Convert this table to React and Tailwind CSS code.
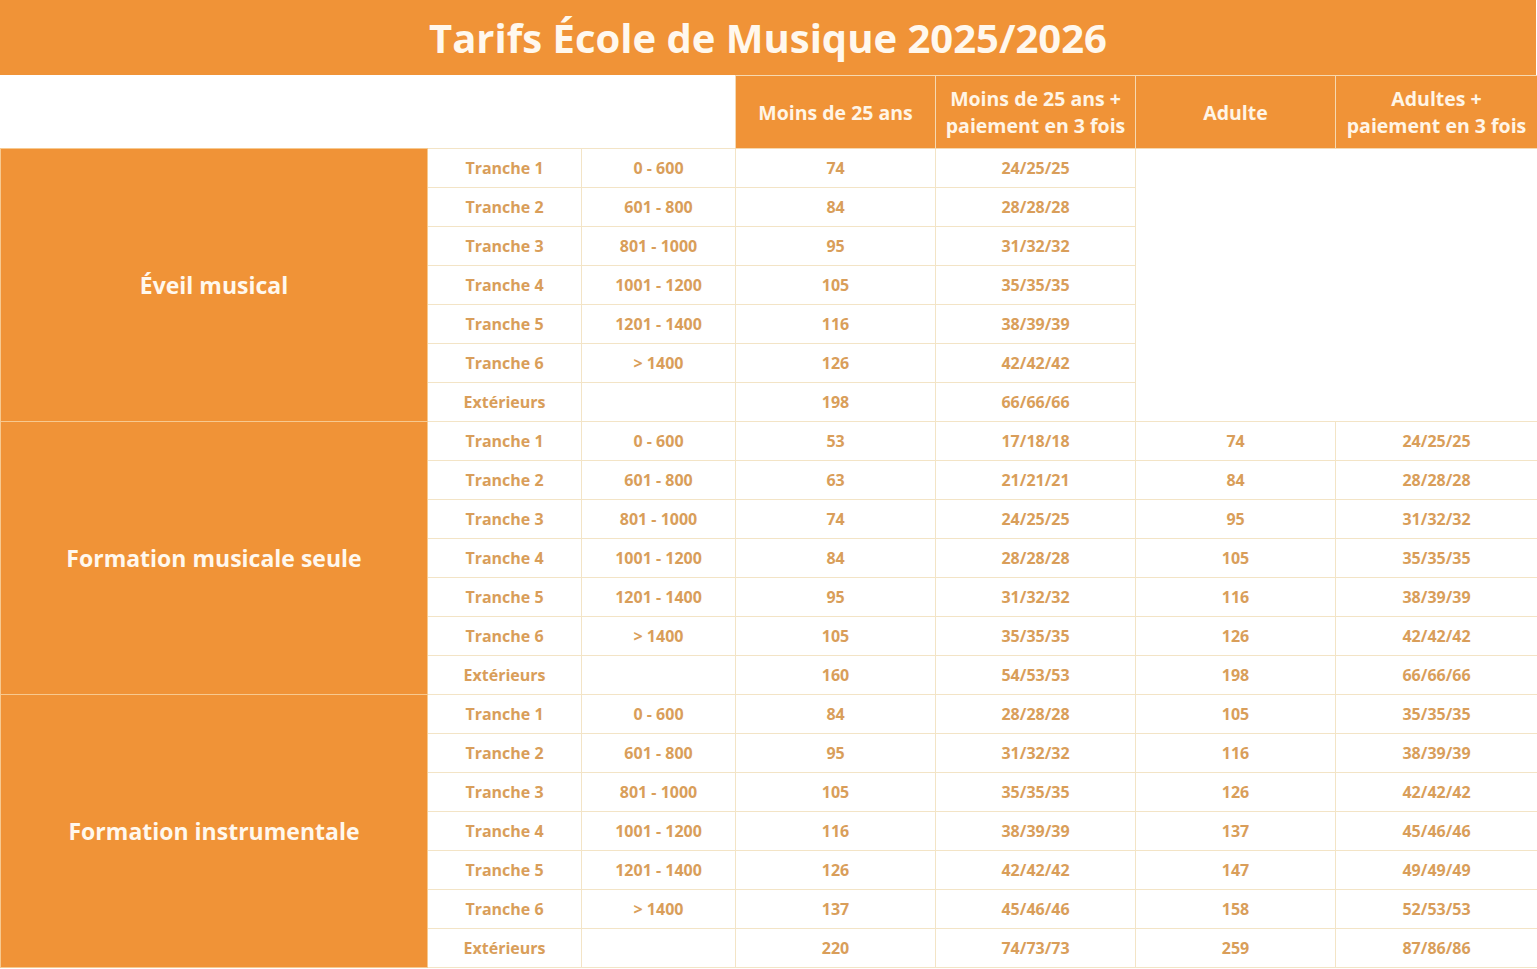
import React from "react";

const groups = [
  {
    name: "Éveil musical",
    rows: [
      ["Tranche 1", "0 - 600", "74", "24/25/25"],
      ["Tranche 2", "601 - 800", "84", "28/28/28"],
      ["Tranche 3", "801 - 1000", "95", "31/32/32"],
      ["Tranche 4", "1001 - 1200", "105", "35/35/35"],
      ["Tranche 5", "1201 - 1400", "116", "38/39/39"],
      ["Tranche 6", "> 1400", "126", "42/42/42"],
      ["Extérieurs", "", "198", "66/66/66"],
    ],
    empty: true,
  },
  {
    name: "Formation musicale seule",
    rows: [
      ["Tranche 1", "0 - 600", "53", "17/18/18", "74", "24/25/25"],
      ["Tranche 2", "601 - 800", "63", "21/21/21", "84", "28/28/28"],
      ["Tranche 3", "801 - 1000", "74", "24/25/25", "95", "31/32/32"],
      ["Tranche 4", "1001 - 1200", "84", "28/28/28", "105", "35/35/35"],
      ["Tranche 5", "1201 - 1400", "95", "31/32/32", "116", "38/39/39"],
      ["Tranche 6", "> 1400", "105", "35/35/35", "126", "42/42/42"],
      ["Extérieurs", "", "160", "54/53/53", "198", "66/66/66"],
    ],
  },
  {
    name: "Formation instrumentale",
    rows: [
      ["Tranche 1", "0 - 600", "84", "28/28/28", "105", "35/35/35"],
      ["Tranche 2", "601 - 800", "95", "31/32/32", "116", "38/39/39"],
      ["Tranche 3", "801 - 1000", "105", "35/35/35", "126", "42/42/42"],
      ["Tranche 4", "1001 - 1200", "116", "38/39/39", "137", "45/46/46"],
      ["Tranche 5", "1201 - 1400", "126", "42/42/42", "147", "49/49/49"],
      ["Tranche 6", "> 1400", "137", "45/46/46", "158", "52/53/53"],
      ["Extérieurs", "", "220", "74/73/73", "259", "87/86/86"],
    ],
  },
];

const cell =
  "border border-[#F3E4C6] h-[39px] p-0 text-center align-middle text-[16px] font-bold text-[#D99E5A]";
const head =
  "border border-[#F6D9B0] bg-[#F09337] p-0 text-center align-middle text-[19.5px] font-bold leading-[27px] text-[#FFF5E6]";

export default function App() {
  return (
    <div
      className="w-[1537px] bg-white"
      style={{ fontFamily: '"Open Sans", "Liberation Sans", sans-serif' }}
    >
      <div className="flex h-[75px] w-[1536px] items-center justify-center bg-[#F09337]">
        <h1 className="text-[40px] font-bold leading-none text-[#FFF8EE]">
          Tarifs École de Musique 2025/2026
        </h1>
      </div>
      <table className="w-[1537px] table-fixed border-collapse">
        <colgroup>
          <col className="w-[427px]" />
          <col className="w-[154px]" />
          <col className="w-[154px]" />
          <col className="w-[200px]" />
          <col className="w-[200px]" />
          <col className="w-[200px]" />
          <col className="w-[202px]" />
        </colgroup>
        <thead>
          <tr className="h-[73px]">
            <th colSpan={3} className="border-0 bg-white p-0"></th>
            <th className={head}>Moins de 25 ans</th>
            <th className={head}>
              Moins de 25 ans +<br />paiement en 3 fois
            </th>
            <th className={head}>Adulte</th>
            <th className={head}>
              Adultes +<br />paiement en 3 fois
            </th>
          </tr>
        </thead>
        <tbody>
          {groups.map((g) =>
            g.rows.map((r, i) => (
              <tr key={g.name + i} className="h-[39px]">
                {i === 0 && (
                  <td
                    rowSpan={7}
                    className="border border-[#F7C98F] bg-[#F09337] p-0 text-center align-middle text-[23px] font-bold text-[#FFF8EE]"
                  >
                    {g.name}
                  </td>
                )}
                {r.map((v, j) => (
                  <td key={j} className={cell}>
                    {v}
                  </td>
                ))}
                {g.empty && i === 0 && (
                  <td colSpan={2} rowSpan={7} className="border border-[#F3E4C6] bg-white p-0"></td>
                )}
              </tr>
            ))
          )}
        </tbody>
      </table>
    </div>
  );
}
